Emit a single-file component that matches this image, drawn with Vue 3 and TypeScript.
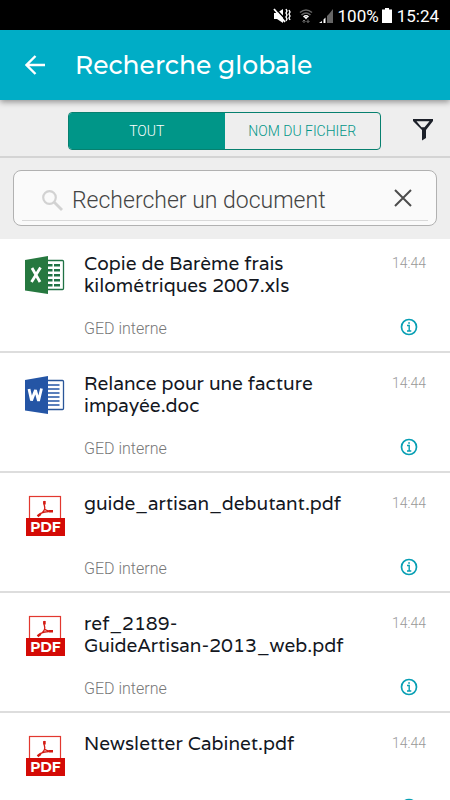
<script setup lang="ts">
import { ref } from 'vue'

type Kind = 'xls' | 'doc' | 'pdf'
interface Doc {
  id: number
  name: string
  kind: Kind
  source: string
  time: string
}

const query = ref('')
const scope = ref<'all' | 'name'>('all')
// A word joiner keeps "Artisan-2013" on one line.
const docs: Doc[] = [
  { id: 1, name: 'Copie de Barème frais kilométriques 2007.xls', kind: 'xls', source: 'GED interne', time: '14:44' },
  { id: 2, name: 'Relance pour une facture impayée.doc', kind: 'doc', source: 'GED interne', time: '14:44' },
  { id: 3, name: 'guide_artisan_debutant.pdf', kind: 'pdf', source: 'GED interne', time: '14:44' },
  { id: 4, name: 'ref_2189-GuideArtisan-\u20602013_web.pdf', kind: 'pdf', source: 'GED interne', time: '14:44' },
  { id: 5, name: 'Newsletter Cabinet.pdf', kind: 'pdf', source: 'GED interne', time: '14:44' },
]
</script>

<template>
  <div class="screen">
    <div class="status">
      <svg width="18" height="18" viewBox="0 0 18 18" fill="none">
        <path d="M1 6h3l6-4v14l-6-4H1z" fill="#fff" />
        <path d="M2 1l12 13" stroke="#000" stroke-width="1.500" />
        <path d="M1 2l11 13" stroke="#fff" stroke-width="1.800" />
        <path d="M13 2l1 2-1 2 1 2-1 2 1 2-1 2M16 3l1 2-1 2 1 2-1 2 1 2" stroke="#fff" stroke-width="1.400" />
      </svg>
      <svg class="wifi" width="16" height="18" viewBox="0 0 16 18" fill="none">
        <path d="M2 5.500q6-5 12 0M3.500 8q4.500-4 9 0" stroke="#666" stroke-width="1.600" />
        <path d="M5.500 10q2.500-2.500 5 0" stroke="#fff" stroke-width="1.500" />
        <path d="M6 10l2 2.500 2-2.500z" fill="#fff" />
        <path d="M6 16v-3M4.500 14.500L6 13l1.500 1.500M10 12.500v3M8.500 14l1.500 1.500 1.500-1.500" stroke="#777" />
      </svg>
      <svg width="16" height="18" viewBox="0 0 16 18">
        <path d="M1 16l3-2v2zM5.500 12.500l2-2V16h-2z" fill="#fff" />
        <path d="M9 9l2-2v9H9zM11 7l4-5v14h-4z" fill="#666" />
      </svg>
      <span class="pct">100%</span>
      <svg class="battery" width="10" height="18" viewBox="0 0 10 18"><path d="M3 1h4v1.500h3V16H0V2.500h3z" fill="#fff" /></svg>
      <span>15:24</span>
    </div>

    <header class="bar">
      <button class="icon-btn" type="button" aria-label="Retour">
        <svg width="20" height="20" viewBox="0 0 20 20" fill="none" stroke="#fff" stroke-width="2.400">
          <path d="M20 10H1.500M10.500 1L1.500 10l9 9" />
        </svg>
      </button>
      <h1>Recherche globale</h1>
    </header>

    <div class="filters">
      <div class="segments">
        <button type="button" :class="{ active: scope === 'all' }" @click="scope = 'all'">TOUT</button>
        <button type="button" :class="{ active: scope === 'name' }" @click="scope = 'name'">NOM DU FICHIER</button>
      </div>
      <button class="icon-btn filter" type="button" aria-label="Filtrer">
        <svg width="20" height="22" viewBox="0 0 20 22">
          <path d="M0 0h20v2l-7 9v8l-4 2.500V11L0 2zM3.500 2.300l5 6h3l5-6z" fill="#1c2029" fill-rule="evenodd" />
        </svg>
      </button>
    </div>

    <form class="search" role="search" @submit.prevent>
      <div class="box">
        <div class="field">
          <svg width="21" height="21" viewBox="0 0 21 21" fill="none" stroke="#d2d2d2">
            <circle cx="7.500" cy="7.500" r="6.300" stroke-width="2.200" />
            <path d="M12 12l8 8" stroke-width="2.800" />
          </svg>
          <input v-model="query" type="text" aria-label="Rechercher un document" placeholder="Rechercher un document" />
          <button class="icon-btn clear" type="button" aria-label="Effacer" @click="query = ''">
            <svg width="18" height="18" viewBox="0 0 18 18" stroke="#4c4c4c" stroke-width="2"><path d="M1 1l16 16M17 1L1 17" /></svg>
          </button>
        </div>
      </div>
    </form>

    <ul class="list">
      <li v-for="doc in docs" :key="doc.id">
        <svg v-if="doc.kind === 'pdf'" class="file" width="40" height="42" viewBox="0 0 40 42">
          <rect x="4.500" y="1.500" width="31" height="30" fill="#fff" stroke="#e2382f" stroke-width="1.200" />
          <path d="M19.500 6.500c-1.500 0 .3 4.500.3 6.500-.5 3.500-3.500 6-6.800 8M19 14c2 1.500 5 2.500 8.500 2.200M15 18.500c3-1.200 6-2 9-2" fill="none" stroke="#d31a12" stroke-width="1.300" />
          <path d="M19.500 6v3.500M12.500 21.300l3-2.300M24 16.200h4" stroke="#d31a12" stroke-width="2.400" />
          <rect x="1" y="23" width="39" height="18" fill="#d40b06" />
          <text x="20.500" y="37" text-anchor="middle" class="pdf-label">PDF</text>
        </svg>
        <svg v-else class="file" width="40" height="42" viewBox="0 0 40 42">
          <rect x="20" y="5.500" width="18.500" height="29" rx="1" fill="#fff" :stroke="doc.kind === 'xls' ? '#207245' : '#2a5699'" stroke-width="1.300" />
          <path v-if="doc.kind === 'xls'" d="M23 9h4.500v2.500H23zM29 9h6v2.500h-6zM23 14h4.500v2.500H23zM29 14h6v2.500h-6zM23 19h4.500v2.500H23zM29 19h6v2.500h-6zM23 24h4.500v2.500H23zM29 24h6v2.500h-6zM23 29h4.500v2.500H23zM29 29h6v2.500h-6z" fill="#207245" />
          <path v-else d="M22 10h12.500M22 14h12.500M22 18h12.500M22 22h12.500M22 26h12.500M22 30h12.500" stroke="#2455a5" stroke-width="1.500" />
          <path d="M0 5l23-4v38L0 35.500z" :fill="doc.kind === 'xls' ? '#26783f' : '#2455a5'" />
          <path v-if="doc.kind === 'xls'" d="M7 13l8 14M15.500 12.500l-9 14.500" stroke="#fff" stroke-width="2.800" />
          <path v-else d="M4 14l2.500 11.500L10.500 15l3 11 3-12.500" fill="none" stroke="#fff" stroke-width="2.800" stroke-linejoin="bevel" />
        </svg>
        <div class="text">
          <h2>{{ doc.name }}</h2>
          <p>{{ doc.source }}</p>
        </div>
        <div class="meta">
          <time>{{ doc.time }}</time>
          <button class="icon-btn" type="button" :aria-label="`Informations sur ${doc.name}`">
            <svg width="18" height="18" viewBox="0 0 18 18" fill="none" stroke="#079fb4">
              <circle cx="9" cy="9" r="7.500" stroke-width="1.700" />
              <path d="M7 7.500h2.200V13M7 13h4.300" stroke-width="1.400" />
              <path d="M8.200 5h1.700" stroke-width="1.700" />
            </svg>
          </button>
        </div>
      </li>
    </ul>
  </div>
</template>

<style>
body {
  margin: 0;
  background: #fff;
}
</style>

<style scoped>
.screen {
  display: flex;
  flex-direction: column;
  height: 100vh;
  font-family: Roboto, 'Liberation Sans', sans-serif;
  color: #14181f;
}
h1,
h2,
p,
ul {
  margin: 0;
  padding: 0;
}
button {
  font: inherit;
  cursor: pointer;
}
svg {
  display: block;
  flex: none;
}
.icon-btn {
  display: flex;
  padding: 0;
  border: 0;
  background: none;
}
.status {
  display: flex;
  flex: none;
  align-items: center;
  justify-content: flex-end;
  height: 30px;
  padding: 2px 11px 0 0;
  box-sizing: border-box;
  background: #000;
  color: #fff;
  font-size: 17px;
}
.wifi {
  margin: 0 4px 0 7px;
}
.pct {
  margin-left: 4px;
}
.battery {
  margin: 0 5px 0 3px;
}
.bar {
  position: relative;
  display: flex;
  flex: none;
  align-items: center;
  gap: 30px;
  height: 70px;
  padding: 0 25px;
  background: #00adc6;
  box-shadow: 0 2px 6px rgba(0, 0, 0, 0.4);
}
h1 {
  color: #fff;
  font: 500 25px/32px Montserrat, Inter, sans-serif;
}
.filters {
  display: flex;
  flex: none;
  align-items: center;
  gap: 32px;
  padding: 12px 17px 6px 68px;
  border-bottom: 2px solid #d4d4d4;
  background: #eee;
}
.filter {
  align-self: flex-start;
  padding-top: 7px;
}
.segments {
  display: flex;
  flex: 1;
  overflow: hidden;
  box-sizing: border-box;
  height: 38px;
  border: 1px solid #07806f;
  border-radius: 4px;
}
.segments button {
  flex: 1;
  padding: 0;
  border: 0;
  background: transparent;
  color: #009688;
  font-size: 14px;
  font-weight: 300;
}
.segments .active {
  background: #009688;
  color: #fff;
}
.search {
  flex: none;
  padding: 12px 13px 13px;
  background: #eee;
}
.box {
  padding: 0 8px 4px;
  border: 1px solid #b1b1b1;
  border-radius: 8px;
  background: #fafafa;
}
.field {
  display: flex;
  align-items: center;
  gap: 9px;
  height: 49px;
  padding: 0 16px 0 20px;
  border-bottom: 1px solid #d8d8d8;
}
.field svg {
  margin-top: 10px;
}
.field input {
  flex: 1;
  min-width: 0;
  height: 30px;
  margin-top: 10px;
  padding: 0;
  border: 0;
  outline: 0;
  background: none;
  color: #444;
  font: 300 23px/30px Roboto, sans-serif;
}
.field input::placeholder {
  color: #444;
  opacity: 1;
}
.field .clear svg {
  margin-top: 4px;
}
.list {
  flex: 1;
  min-height: 0;
  overflow-y: auto;
  scrollbar-width: none;
  list-style: none;
}
li {
  display: flex;
  align-items: stretch;
  box-sizing: border-box;
  min-height: 120px;
  padding: 19px 24px 12px 25px;
  border-bottom: 2px solid #ddd;
}
li:first-child {
  min-height: 114px;
  padding-top: 13px;
}
.file {
  margin: 3px 19px 0 0;
}
.text {
  display: flex;
  flex: 1;
  flex-direction: column;
  justify-content: space-between;
  min-width: 0;
}
h2 {
  max-width: 270px;
  font: 300 19px/22px Varela, 'Varela Round', Montserrat, 'Noto Sans', sans-serif;
}
p {
  color: #777;
  font-size: 16px;
  font-weight: 300;
  line-height: 20px;
}
.meta {
  display: flex;
  flex-direction: column;
  align-items: flex-end;
  justify-content: space-between;
}
time {
  color: #999;
  font-size: 14px;
  font-weight: 300;
  line-height: 22px;
}
.meta .icon-btn {
  margin: 0 8px 3px 0;
}
.pdf-label {
  fill: #fff;
  font: 700 14px Montserrat, Inter, sans-serif;
}
</style>
